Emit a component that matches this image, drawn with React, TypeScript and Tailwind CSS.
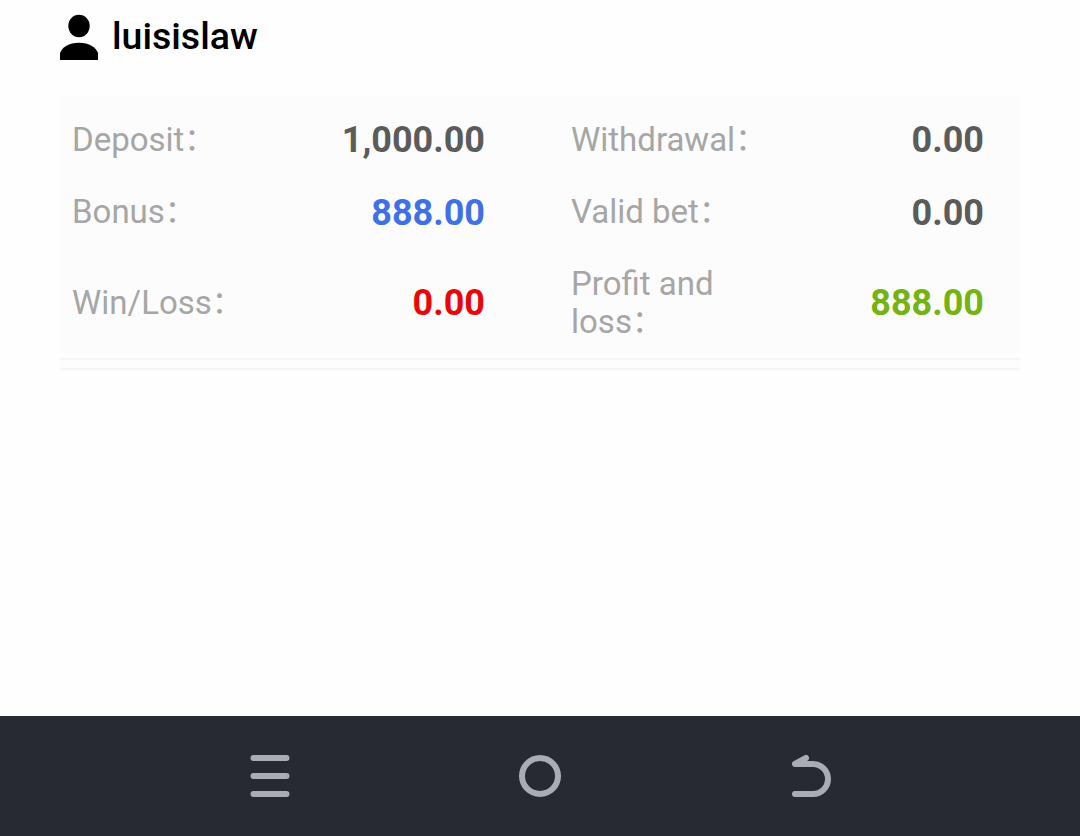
const records = [
  [
    { label: "Deposit", value: "1,000.00", color: "text-[#5b5b5b]" },
    { label: "Withdrawal", value: "0.00", color: "text-[#5b5b5b]" },
  ],
  [
    { label: "Bonus", value: "888.00", color: "text-[#4070e6] -mb-0.5" },
    { label: "Valid bet", value: "0.00", color: "text-[#5b5b5b] -mb-0.5" },
  ],
  [
    { label: "Win/Loss", value: "0.00", color: "text-[#ea0508]" },
    { label: "Profit and loss", value: "888.00", color: "text-[#74b312]" },
  ],
];

const Summary = () => {
  return (
    <div className="mt-[34px] h-[257px] w-[960px] bg-[#fcfcfc] pt-2">
      {records.map((row) => (
        <div
          key={row[0].label}
          className="grid min-h-[72px] grid-cols-[499px_461px] py-[17px]"
        >
          {row.map((item) => (
            <div key={item.label} className="flex items-center pl-3">
              <span className="w-[206px] text-[33px] leading-[38px] text-[#a6a6a6]">
                {item.label}
                <span className="align-[1px] text-[31px] leading-none">：</span>
              </span>
              <span
                className={`w-[207px] text-right text-[36px] leading-[38px] font-bold ${item.color}`}
              >
                {item.value}
              </span>
            </div>
          ))}
        </div>
      ))}
    </div>
  );
};

const NavBar = () => {
  return (
    <div className="flex h-[120px] items-center justify-center gap-[190px] bg-[#272933] text-[#a9abb5]">
      {/* Menu */}
      <svg width="80" height="70" viewBox="0 0 80 70" fill="none" stroke="currentColor" strokeWidth="6" strokeLinecap="round">
        <path d="M23.5 17h33M23.5 35h33M23.5 53h33" />
      </svg>
      {/* Home */}
      <svg width="80" height="70" viewBox="0 0 80 70" fill="none" stroke="currentColor" strokeWidth="6">
        <circle cx="40" cy="35" r="18" />
      </svg>
      {/* Back */}
      <svg width="80" height="70" viewBox="0 0 80 70" fill="none" stroke="currentColor" strokeWidth="6" strokeLinecap="round" strokeLinejoin="round">
        <path d="M36 17L25 23H43a15 15 0 0 1 0 30H25" />
        <path d="M36 17L25 23H36Z" fill="currentColor" stroke="none" />
      </svg>
    </div>
  );
};

const App = () => {
  return (
    <div className="flex h-[836px] w-[1080px] flex-col overflow-hidden bg-[#fefefe] font-['Roboto','Noto_Sans_CJK_SC',sans-serif]">
      <div className="flex-1 px-[60px] pt-[14px]">
        {/* User */}
        <div className="flex h-12 items-start gap-[14px]">
          <svg width="38" height="46" viewBox="0 0 38 46" fill="#000">
            <ellipse cx="19" cy="12" rx="10.7" ry="11.2" />
            <path d="M0 46V39C2 33 9 28.7 19 28.7S36 33 38 39V46Z" />
          </svg>
          <h1 className="-mt-0.5 text-[37.5px] leading-[48px] font-medium text-black">
            luisislaw
          </h1>
        </div>
        <Summary />
        <div className="mt-[5px] h-3 border-y-2 border-[#f5f5f5] bg-[#fdfdfd]" />
      </div>
      <NavBar />
    </div>
  );
};

export default App;
